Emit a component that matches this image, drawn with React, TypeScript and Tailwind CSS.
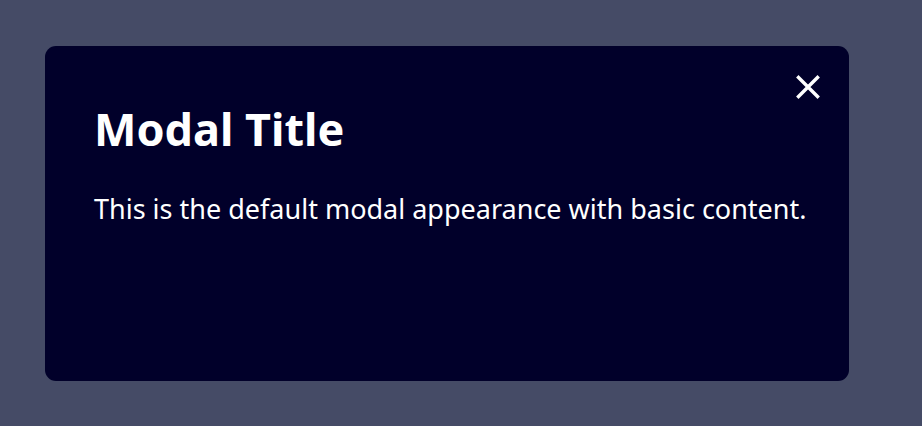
export default function App() {
  return (
    <div className="min-h-[426px] w-full bg-[#454b66] pl-[45px] pt-[46px]" style={{ fontFamily: '"Noto Sans", "Open Sans", sans-serif' }}>
      <div className="relative h-[335px] w-[804px] rounded-[11px] bg-[#01002a] pl-[49px] pr-[40px] pt-[56px]">
        <button className="absolute right-[29px] top-[29px] flex h-[24px] w-[24px] items-center justify-center text-white">
          <svg width="24" height="24" viewBox="0 0 24 24" fill="none" stroke="currentColor" strokeWidth="3.4" strokeLinecap="square">
            <path d="M2.5 2.5 L21.5 21.5 M21.5 2.5 L2.5 21.5" />
          </svg>
        </button>
        <h1 className="text-[45px] font-bold leading-[54px] text-white">Modal Title</h1>
        <p className="mt-[35px] text-[27px] leading-[36px] text-white">This is the default modal appearance with basic content.</p>
      </div>
    </div>
  );
}
